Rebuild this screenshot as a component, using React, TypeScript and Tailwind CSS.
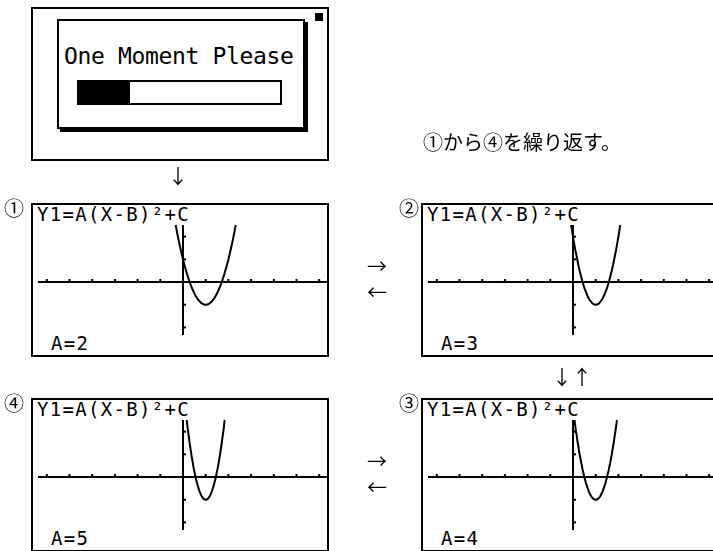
const UNIT = 22.7;
const OX = 150;
const OY = 77;
const TOP = 20;

const lcd = "font-['DejaVu_Sans_Mono',monospace]";
const jp = "font-['Noto_Sans_CJK_JP',sans-serif] will-change-transform";

// parabola y = a(x-1)^2 - 1, clipped at the top of the graph area
function parabola(a: number) {
  const v = (OY - TOP) / UNIT;
  const r = Math.sqrt((v + 1) / a);
  const pts: string[] = [];
  for (let i = 0; i <= 80; i++) {
    const x = 1 - r + (2 * r * i) / 80;
    const y = a * (x - 1) ** 2 - 1;
    pts.push(`${(OX + x * UNIT).toFixed(1)},${(OY - y * UNIT).toFixed(1)}`);
  }
  return pts.join(" ");
}

function Graph({ a }: { a: number }) {
  const xt = [-6, -5, -4, -3, -2, -1, 1, 2, 3, 4, 5, 6];
  const yt = [-2, -1, 1, 2];
  return (
    <svg className="absolute inset-0" width="294" height="150" viewBox="0 0 294 150">
      <line x1="5" y1={OY} x2="294" y2={OY} stroke="#000" strokeWidth="2" />
      <line x1={OX} y1={TOP} x2={OX} y2="130" stroke="#000" strokeWidth="2" />
      {xt.map((k) => (
        <rect key={k} x={OX + k * UNIT - 1} y={OY - 3} width="2" height="2" fill="#000" />
      ))}
      {yt.map((k) => (
        <rect key={k} x={OX + 1} y={OY + k * UNIT - 1} width="2" height="2" fill="#000" />
      ))}
      <polyline points={parabola(a)} fill="none" stroke="#000" strokeWidth="2" />
    </svg>
  );
}

function Screen({ a }: { a: number }) {
  return (
    <div className="relative mt-[5px] h-[154px] w-[298px] shrink-0 border-2 border-black bg-white">
      <Graph a={a} />
      <div className={`relative flex h-full flex-col justify-between pb-[2px] text-[19px] leading-none tracking-[1.3px] ${lcd}`}>
        <p className="pl-[4px]">Y1=A(X-B)²+C</p>
        <p className="pl-[18px]">A={a}</p>
      </div>
    </div>
  );
}

function ScreenRow({ l, la, r, ra }: { l: string; la: number; r: string; ra: number }) {
  return (
    <div className="flex items-start">
      <div className={`w-[31px] shrink-0 pl-[4px] text-[20px] leading-none ${jp}`}>{l}</div>
      <Screen a={la} />
      <div className="w-[70px] shrink-0 pl-[38px] pt-[55px]">
        <p className={`whitespace-pre text-[20px] leading-[26px] ${jp}`}>{"→\n←"}</p>
      </div>
      <div className={`w-[22px] shrink-0 text-[20px] leading-none ${jp}`}>{r}</div>
      <Screen a={ra} />
    </div>
  );
}

export default function App() {
  return (
    <div className="h-[551px] w-[713px] overflow-hidden bg-white text-black">
      <div className="flex items-start">
        <div className="relative ml-[31px] mt-[7px] h-[154px] w-[298px] shrink-0 border-2 border-black">
          <span className="absolute right-[4px] top-[4px] h-[8px] w-[8px] bg-black" />
          <div className="ml-[24px] mt-[10px] h-[110px] w-[248px] border-2 border-black shadow-[3px_3px_0_#000]">
            <p className={`ml-[5px] mt-[24px] whitespace-pre text-[23px] leading-none tracking-[-0.35px] ${lcd}`}>
              One Moment Please
            </p>
            <div className="ml-[18px] mt-[12px] flex h-[25px] w-[205px] border-2 border-black">
              <div className="w-[51px] bg-black" />
            </div>
          </div>
        </div>
        <p className={`ml-[94px] mt-[132px] whitespace-nowrap text-[20px] leading-none ${jp}`}>①から④を繰り返す。</p>
      </div>

      <div className={`ml-[168px] mt-[5px] h-[20px] w-[20px] text-[20px] leading-none ${jp}`}>↓</div>

      <div className="mt-[12px]">
        <ScreenRow l="①" la={2} r="②" ra={3} />
      </div>

      <div className={`ml-[552px] mt-[10px] flex text-[20px] leading-none ${jp}`}>
        <span>↓</span>
        <span>↑</span>
      </div>

      <div className="mt-[6px]">
        <ScreenRow l="④" la={5} r="③" ra={4} />
      </div>
    </div>
  );
}
